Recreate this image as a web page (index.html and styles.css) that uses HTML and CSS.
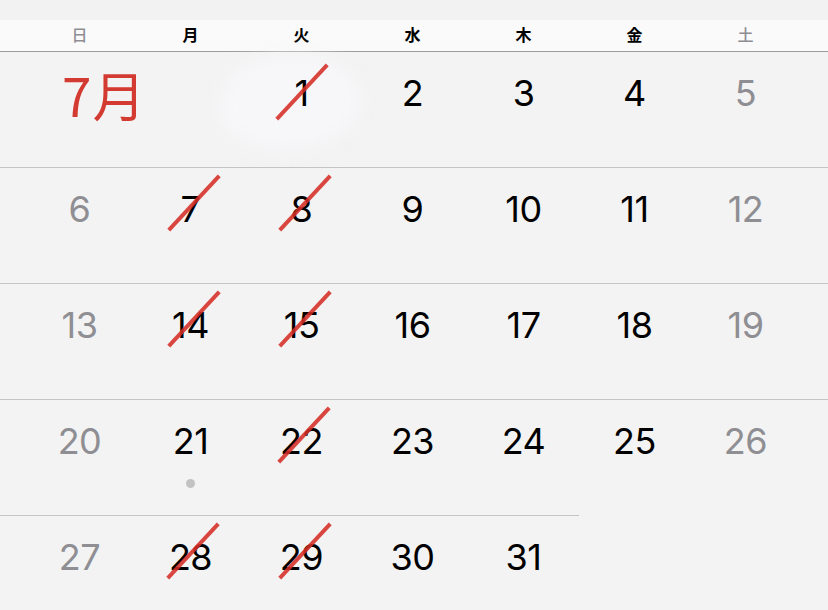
FILE: index.html
```html
<!DOCTYPE html>
<html lang="ja">
<head>
    <meta charset="UTF-8">
    <meta name="viewport" content="width=device-width, initial-scale=1.0">
    <title>7月</title>
    <link rel="stylesheet" href="styles.css">
</head>
<body>
    <div class="status-strip"></div>

    <!-- Weekday header -->
    <div class="weekdays">
        <span class="weekend">日</span>
        <span>月</span>
        <span>火</span>
        <span>水</span>
        <span>木</span>
        <span>金</span>
        <span class="weekend">土</span>
    </div>

    <div class="month">
        <div class="week first">
            <div class="smudge"></div>
            <div class="day month-label">7月</div>
            <div class="day"></div>
            <div class="day"><span class="num struck top">1</span></div>
            <div class="day"><span class="num">2</span></div>
            <div class="day"><span class="num">3</span></div>
            <div class="day"><span class="num">4</span></div>
            <div class="day"><span class="num weekend">5</span></div>
        </div>

        <div class="rule"></div>
        <div class="week">
            <div class="day"><span class="num weekend">6</span></div>
            <div class="day"><span class="num struck">7</span></div>
            <div class="day"><span class="num struck">8</span></div>
            <div class="day"><span class="num">9</span></div>
            <div class="day"><span class="num">10</span></div>
            <div class="day"><span class="num">11</span></div>
            <div class="day"><span class="num weekend">12</span></div>
        </div>

        <div class="rule"></div>
        <div class="week">
            <div class="day"><span class="num weekend">13</span></div>
            <div class="day"><span class="num struck">14</span></div>
            <div class="day"><span class="num struck">15</span></div>
            <div class="day"><span class="num">16</span></div>
            <div class="day"><span class="num">17</span></div>
            <div class="day"><span class="num">18</span></div>
            <div class="day"><span class="num weekend">19</span></div>
        </div>

        <div class="rule"></div>
        <div class="week">
            <div class="day"><span class="num weekend">20</span></div>
            <div class="day"><span class="num">21</span><span class="event-dot"></span></div>
            <div class="day"><span class="num struck">22</span></div>
            <div class="day"><span class="num">23</span></div>
            <div class="day"><span class="num">24</span></div>
            <div class="day"><span class="num">25</span></div>
            <div class="day"><span class="num weekend">26</span></div>
        </div>

        <div class="rule short"></div>
        <div class="week">
            <div class="day"><span class="num weekend">27</span></div>
            <div class="day"><span class="num struck">28</span></div>
            <div class="day"><span class="num struck">29</span></div>
            <div class="day"><span class="num">30</span></div>
            <div class="day"><span class="num">31</span></div>
        </div>
    </div>
</body>
</html>
```

FILE: styles.css
```css
body {
    margin: 0;
    background: #f3f3f3;
    font-family: Inter, "Noto Sans CJK JP", sans-serif;
    color: #000;
    overflow: hidden;
}

.status-strip {
    height: 20px;
    background: #f2f2f2;
}

/* Weekday header */
.weekdays {
    display: grid;
    grid-template-columns: repeat(7, 111px);
    padding-left: 24px;
    padding-bottom: 4px;
    height: 27px;
    align-items: center;
    background: #fafafa;
    border-bottom: 1px solid #9c9c9c;
    font-family: "Noto Sans CJK JP", sans-serif;
    font-size: 16px;
    font-weight: 700;
    text-align: center;
}

.weekdays .weekend {
    color: #8e8e93;
    font-weight: 500;
}

/* Month grid */
.week {
    display: grid;
    grid-template-columns: repeat(7, 111px);
    padding-left: 24px;
    height: 115px;
}

.week.first {
    position: relative;
}

.rule {
    height: 1px;
    background: #c4c4c4;
}

.rule.short {
    width: 579px;
}

.day {
    display: flex;
    flex-direction: column;
    align-items: center;
    padding-top: 22px;
}

.num {
    position: relative;
    font-size: 36px;
    line-height: 38px;
    letter-spacing: -0.5px;
}

.num.weekend {
    color: #8e8e93;
}

.num.struck::after {
    content: "";
    position: absolute;
    left: 50%;
    top: 50%;
    width: 74px;
    height: 4px;
    background: rgba(213, 45, 38, 0.88);
    transform: translate(-50%, -50%) translate(3px, -6px) rotate(-47deg);
}

.num.struck.top::after {
    transform: translate(-50%, -50%) translate(0, -1px) rotate(-47deg);
}

.event-dot {
    width: 9px;
    height: 9px;
    margin-top: 19px;
    border-radius: 50%;
    background: #c2c2c2;
}

.month-label {
    align-items: flex-start;
    padding-top: 12px;
    padding-left: 38px;
    white-space: nowrap;
    font-family: "Noto Sans CJK JP", sans-serif;
    font-size: 53px;
    font-weight: 400;
    line-height: 60px;
    color: #d33a31;
    letter-spacing: 1px;
}

/* whitish smear around the first day */
.smudge {
    position: absolute;
    left: 220px;
    top: 4px;
    width: 140px;
    height: 92px;
    border-radius: 50% 45% 50% 40%;
    background: #f7f7fa;
    filter: blur(10px);
}
```
